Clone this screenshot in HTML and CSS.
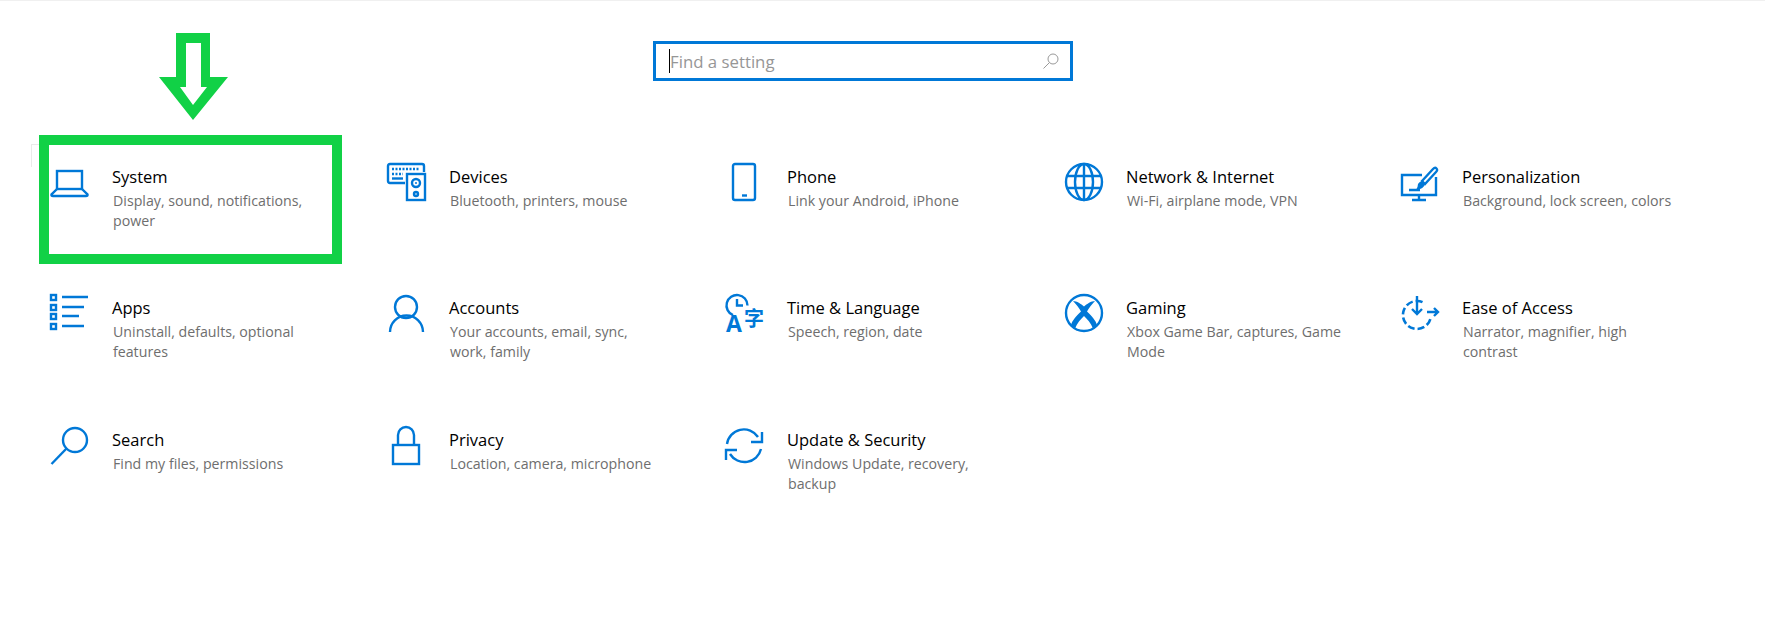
FILE: index.html
```html
<!DOCTYPE html>
<html lang="en">
<head>
  <meta charset="UTF-8">
  <title>Settings</title>
  <link rel="stylesheet" href="styles.css">
</head>
<body>
  <div class="search-row">
    <div class="search-box">
      <span class="caret"></span>
      <span class="search-text">Find a setting</span>
      <svg class="search-glass" viewBox="0 0 16 16"><circle cx="10" cy="6" r="5"/><path d="M6.5 9.5L0.5 15.5"/></svg>
    </div>
  </div>

  <div class="grid">
    <div class="item">
      <svg class="icon" viewBox="0 0 40 40"><rect x="7" y="8" width="25" height="18"/><path d="M7 26L1.5 31.5Q1 33 3 33H36Q38 33 37.5 31.5L32 26"/></svg>
      <div class="label"><div class="title">System</div><div class="desc">Display, sound, notifications,<br>power</div></div>
    </div>
    <div class="item">
      <svg class="icon" viewBox="0 0 40 40"><path d="M18 20H3Q1 20 1 18V3Q1 1 3 1H35Q37 1 37 3V9"/><rect x="20" y="11" width="18" height="26"/><circle cx="29" cy="20" r="4"/><circle class="solid" cx="29" cy="20" r="1"/><circle cx="29" cy="31" r="2"/><path class="dots" d="M5 6H33M5 11H16"/><path d="M5 15.5H16"/></svg>
      <div class="label"><div class="title">Devices</div><div class="desc">Bluetooth, printers, mouse</div></div>
    </div>
    <div class="item">
      <svg class="icon" viewBox="0 0 40 40"><rect x="8" y="1" width="22" height="36" rx="2"/><path d="M17 32.5H22"/></svg>
      <div class="label"><div class="title">Phone</div><div class="desc">Link your Android, iPhone</div></div>
    </div>
    <div class="item">
      <svg class="icon" viewBox="0 0 40 40"><circle cx="20" cy="19" r="18"/><ellipse cx="20" cy="19" rx="9" ry="18"/><path d="M20 1V37M4 13H36M4 25H36"/></svg>
      <div class="label"><div class="title">Network &amp; Internet</div><div class="desc">Wi-Fi, airplane mode, VPN</div></div>
    </div>
    <div class="item">
      <svg class="icon" viewBox="0 0 40 40"><path d="M22 12H2V32H36V14M19 32V37M12 37H26M9 27H20"/><path d="M22 18L33 6Q35 4 36.5 5.5Q38 7 36 9L25 21Z"/><path class="solid" d="M22 18L25 21Q24 26 16 27Q18 24 18 21Q19 19 22 18Z"/></svg>
      <div class="label"><div class="title">Personalization</div><div class="desc">Background, lock screen, colors</div></div>
    </div>

    <div class="item">
      <svg class="icon" viewBox="0 0 40 40"><rect x="1" y="1" width="5" height="5"/><rect x="1" y="11" width="5" height="5"/><rect x="1" y="20" width="5" height="5"/><rect x="1" y="30" width="5" height="5"/><path d="M12 3H38M12 13H34M12 22H29M12 32H34"/></svg>
      <div class="label"><div class="title">Apps</div><div class="desc">Uninstall, defaults, optional<br>features</div></div>
    </div>
    <div class="item">
      <svg class="icon" viewBox="0 0 40 40"><circle cx="19" cy="13" r="11"/><path d="M3 38A16.5 16.5 0 0 1 36 38"/></svg>
      <div class="label"><div class="title">Accounts</div><div class="desc">Your accounts, email, sync,<br>work, family</div></div>
    </div>
    <div class="item">
      <svg class="icon" viewBox="0 0 40 40"><path d="M8 21.2A10.500 10.500 0 1 1 22.500 11.500M12 5V11.500H18"/><text class="icon-text" x="1" y="38" font-size="23">A</text><text class="icon-text" x="19" y="32" font-size="20">字</text></svg>
      <div class="label"><div class="title">Time &amp; Language</div><div class="desc">Speech, region, date</div></div>
    </div>
    <div class="item">
      <svg class="icon" viewBox="0 0 40 40"><circle cx="20" cy="19" r="18"/><path class="solid" d="M9 7C13 7 17 10 20 12.500C23 10 27 7 31 7C28 10 25 14 23 17.500C28 22 32 27 33 31L29 34.500C27 29 23 25 20 22C17 25 13 29 11 34.500L7 31C8 27 12 22 17 17.500C15 14 12 10 9 7Z"/></svg>
      <div class="label"><div class="title">Gaming</div><div class="desc">Xbox Game Bar, captures, Game<br>Mode</div></div>
    </div>
    <div class="item">
      <svg class="icon" viewBox="0 0 40 40"><path class="dashed" d="M22.500 8.100A14 14 0 1 0 30.800 23"/><path d="M17 2V20M12 15L17 20L22 15M27 18H38M34 14L38 18L34 22"/></svg>
      <div class="label"><div class="title">Ease of Access</div><div class="desc">Narrator, magnifier, high<br>contrast</div></div>
    </div>

    <div class="item">
      <svg class="icon" viewBox="0 0 40 40"><circle cx="25" cy="14" r="12"/><path d="M16.500 22.500L1.500 38"/></svg>
      <div class="label"><div class="title">Search</div><div class="desc">Find my files, permissions</div></div>
    </div>
    <div class="item">
      <svg class="icon" viewBox="0 0 40 40"><rect x="6" y="19" width="26" height="19"/><path d="M11 19V9A8 8 0 0 1 27 9V19"/></svg>
      <div class="label"><div class="title">Privacy</div><div class="desc">Location, camera, microphone</div></div>
    </div>
    <div class="item">
      <svg class="icon" viewBox="0 0 40 40"><path d="M2 18A17 17 0 0 1 33 11M37 6V16H26M36 23A17 17 0 0 1 5 28M1 34V24H12"/></svg>
      <div class="label"><div class="title">Update &amp; Security</div><div class="desc">Windows Update, recovery,<br>backup</div></div>
    </div>
  </div>

  <!-- annotation drawn over the screenshot -->
  <div class="focus-mark"></div>
  <div class="highlight"></div>
  <svg class="arrow" viewBox="0 0 70 88"><path fill-rule="evenodd" d="M17 1H51V45H69L34 88L0 45H17ZM27 11V55H21L34 73L48 55H42V11Z"/></svg>
</body>
</html>
```

FILE: styles.css
```css
body {
  margin: 0;
  height: 641px;
  overflow: hidden;
  position: relative;
  background: #fff;
  border-top: 1px solid #f0f0f0;
  box-sizing: border-box;
  font-family: "Open Sans", "Noto Sans CJK SC", sans-serif;
}

.search-row {
  padding: 40px 0 0 653px;
}

.search-box {
  width: 420px;
  height: 40px;
  box-sizing: border-box;
  border: 3px solid #0078d7;
  display: flex;
  align-items: center;
  padding: 0 11px 0 13px;
}

.caret {
  width: 1px;
  height: 24px;
  background: #000;
}

.search-text {
  font-size: 16.800px;
  color: #969696;
  flex: 1;
}

.search-glass {
  width: 16px;
  height: 16px;
  fill: none;
  stroke: #999;
  stroke-width: 1;
}

.grid {
  display: grid;
  grid-template-columns: 337px 338px 339px 336px 337px;
  grid-auto-rows: 131.400px;
  padding: 82px 0 0 50px;
}

.item {
  display: flex;
  gap: 22px;
}

.icon {
  width: 40px;
  height: 40px;
  flex: none;
  fill: none;
  stroke: #0078d7;
  stroke-width: 2.400;
  overflow: visible;
}

.icon .solid {
  fill: #0078d7;
  stroke: none;
}

.icon .dots {
  stroke-dasharray: 2 1.500;
}

.icon .dashed {
  stroke-width: 2.600;
  stroke-dasharray: 7 3;
}

.icon .icon-text {
  fill: #0078d7;
  stroke: none;
  font-weight: 700;
}

.label {
  padding-top: 2px;
}

.title {
  font-size: 16.500px;
  line-height: 24px;
  color: #000;
  margin-bottom: 2px;
}

.desc {
  font-size: 14.200px;
  line-height: 20px;
  color: #6e6e6e;
  margin-left: 1px;
  white-space: nowrap;
}

.focus-mark {
  position: absolute;
  left: 31px;
  top: 143px;
  width: 20px;
  height: 22px;
  border: solid #eaeaea;
  border-width: 1px 0 0 1px;
}

.highlight {
  position: absolute;
  left: 39px;
  top: 134px;
  width: 303px;
  height: 129px;
  box-sizing: border-box;
  border: 10px solid #11d146;
}

.arrow {
  position: absolute;
  left: 159px;
  top: 31px;
  width: 70px;
  height: 88px;
  fill: #11d146;
}
```
